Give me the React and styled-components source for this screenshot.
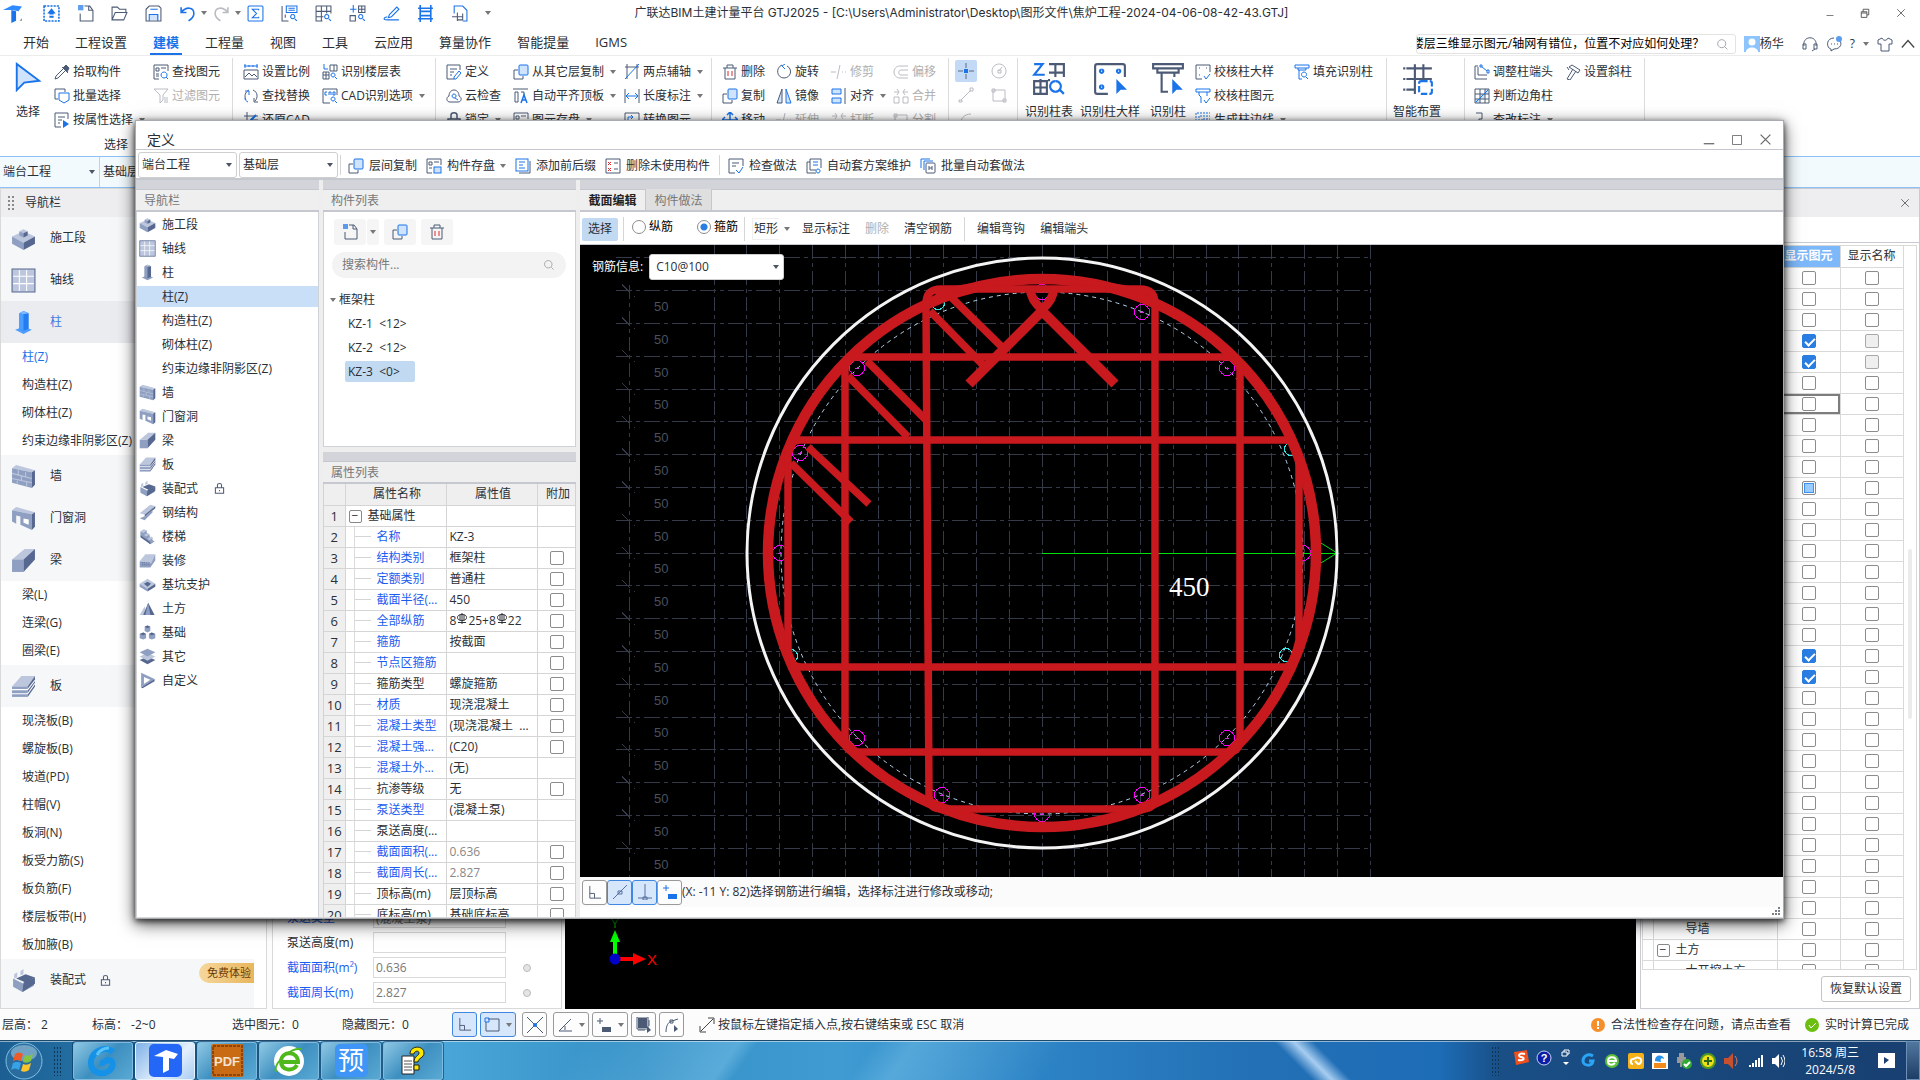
import React from "react";
import styled, { createGlobalStyle, css } from "styled-components";

const DARK = "#4d5a75";
const BLUE = "#1a73e8";
const PALE = "#cfe3fc";
const GREY = "#b9bcc2";
const RED = "#c8191e";

const GlobalStyle = createGlobalStyle`
  * { box-sizing: border-box; }
  html, body, #root { height: 100%; }
  body {
    margin: 0;
    overflow: hidden;
    background: #fff;
    color: #2b2f36;
    font: 12px/16px "Open Sans", "Noto Sans CJK SC", sans-serif;
  }
  button, input, select { font: inherit; color: inherit; margin: 0; padding: 0; }
  button { border: 0; background: none; white-space: nowrap; }
  a { color: inherit; text-decoration: none; }
  table { border-collapse: collapse; table-layout: fixed; }
  svg { display: block; flex: none; }
`;

/* ---------- icons ---------- */

const line = (d, stroke = DARK, extra = {}) => <path d={d} stroke={stroke} {...extra} />;

const icons = {
  logo: (
    <>
      <path d="M0 5 8 1l8 1-3 4-5-1z" fill="#2f8bff" />
      <path d="M7 5l4 1v8l-4 2z" fill={BLUE} />
      <path d="M14 14h2v-2z" fill="#888" />
    </>
  ),
  send: (
    <>
      <rect x="1" y="1" width="14" height="14" stroke={BLUE} strokeWidth="1.5" strokeDasharray="2 1" />
      <path d="M8 3 4 8h2v1h4V8h2zM6 10h4v2H6z" fill={BLUE} />
    </>
  ),
  newFile: (
    <>
      {line("M7 1h5l3 4v10H3V8M11 1v4h4")}
      <path d="M1 0h5v5H1z" fill={BLUE} opacity=".7" />
    </>
  ),
  open: <>{line("M1 14V2h5l2 2h6v3M1 14l3-7h11l-3 7z")}</>,
  save: (
    <>
      <path d="M4 9h9v5H4z" fill={PALE} />
      {line("M1 4l3-3h9l2 2v12H1z")}
      {line("M4 15V9h8v6M5 4h7", BLUE)}
    </>
  ),
  undo: <>{line("M2 2v5h5M2 7c5-6 12-5 12 1 0 3-2 5-5 7", BLUE, { strokeWidth: 1.5 })}</>,
  redo: <>{line("M14 2v5H9M14 7C9 1 2 2 2 8c0 3 2 5 5 7", GREY, { strokeWidth: 1.5 })}</>,
  sum: (
    <>
      <rect x="1" y="1" width="14" height="14" rx="1" stroke={BLUE} />
      {line("M11 5V4H5l4 4-4 4h6v-1", BLUE)}
    </>
  ),
  ruler: (
    <>
      {line("M1 1v14h6M4 12V9")}
      {line("M5 1h10v6H5zM7 3h6M7 5h6", BLUE)}
      {line("M11 9a2 2 0 1 0 .1 0M13 13l2 2", BLUE)}
    </>
  ),
  gridFind: (
    <>
      {line("M1 1h14v7M1 1v14h6M1 6h14M1 11h7M6 1v14M11 1v7")}
      {line("M11 9a2 2 0 1 0 .1 0M13 13l2 2", BLUE)}
    </>
  ),
  blocksFind: (
    <>
      {line("M9 1h6v6H9zM1 10h5v5H1zM12 1v6M9 4h6")}
      {line("M4 0v7M1 4h6M11 9a2 2 0 1 0 .1 0M13 13l2 2", BLUE)}
    </>
  ),
  pencil: <>{line("M6 9 13 2l2 2-7 7-3 1zM4 11c-4 1-4 3 0 3h11", BLUE)}</>,
  ladder: <>{line("M3 0v16M13 0v16M1 3h14M3 6h10M3 10h10M1 13h14", BLUE, { strokeWidth: 1.5 })}</>,
  exportBox: (
    <>
      {line("M3 8V1h8l4 4v10h-4", BLUE)}
      {line("M6 7v8M1 11h10M11 8v6H6")}
    </>
  ),
  cursorBig: <path d="M2 1v14l4-4 8-1z" fill={PALE} stroke={BLUE} />,
  dropper: (
    <>
      <path d="M9 4l4 4 2-4-3-3z" fill={DARK} stroke={DARK} />
      {line("M9 5 2 12l-1 3 3-1 7-7M8 3l6 6")}
    </>
  ),
  batch: (
    <>
      {line("M4 11H1V1h10v3")}
      <path d="M5 5h10v7l-5 3-5-3z" fill="#fff" stroke={BLUE} />
    </>
  ),
  propPick: (
    <>
      {line("M7 15H1V1h13v6M4 5h7M4 8h4M4 11h2")}
      <path d="M9 8v8l6-4z" fill={BLUE} />
    </>
  ),
  find: (
    <>
      {line("M6 15H1V1h14v6M3 4h3v3H3zM8 4h5M3 10h3M3 12h3")}
      {line("M11 8a3 3 0 1 0 .1 0M13 13l2 2", BLUE)}
    </>
  ),
  filter: <>{line("M1 1h14L10 7v5l-3 3V7zM11 10h4M11 12h4M11 14h4", GREY)}</>,
  scale: (
    <>
      {line("M1 6h14v9H1zM2 13l4-4 3 3 2-2 3 3")}
      {line("M1 2h14M2 0v4M14 0v4M6 1v2M10 1v2", BLUE)}
    </>
  ),
  replace: (
    <>
      {line("M3 12C1 8 2 4 6 2M10 2c5 2 5 8 2 11M11 10v4h4")}
      {line("M2 3h4v4M5 14c-2-1-3-2-3-4", BLUE)}
    </>
  ),
  restore: (
    <>
      {line("M1 4h14M4 0v12M7 8h8")}
      {line("M13 3 8 8v4", BLUE, { strokeWidth: 2 })}
    </>
  ),
  floorTable: (
    <>
      {line("M8 1h7v6H8zM1 8h6v7H1zM12 1v6M1 11h6M4 8v7")}
      {line("M2 0v5h4M11 9a2 2 0 1 0 .1 0M13 13l2 2", BLUE)}
    </>
  ),
  cad: (
    <>
      {line("M8 15H1V1h14v6")}
      {line("M5 4H3v3h2M7 7V4h2v3M11 4v3h2V4zM11 9a2 2 0 1 0 .1 0M13 13l2 2", BLUE)}
    </>
  ),
  define: (
    <>
      {line("M8 15H1V1h13v5M4 5h7M4 8h4M4 11h2")}
      {line("M8 13l5-6 2 2-5 6H8z", BLUE)}
    </>
  ),
  cloud: (
    <>
      {line("M4 14c-4 0-4-5-1-6 0-8 10-8 10 0 3 1 3 6-1 6z")}
      {line("M8 6a2 2 0 1 0 .1 0M9 10l3 2", BLUE)}
    </>
  ),
  lock: <>{line("M2 7h12v8H2zM5 7V3c0-3 6-3 6 0v4M8 10v2", DARK, { strokeWidth: 1.5 })}</>,
  copy: (
    <>
      {line("M5 6H1v9h9v-3")}
      <rect x="6" y="1" width="9" height="10" rx="1" fill={PALE} stroke={BLUE} />
    </>
  ),
  align: (
    <>
      {line("M0 1h15M2 4h3v10H2zM8 4h3v4")}
      {line("M8 15l3-8 3 8M9 12h4", BLUE, { strokeWidth: 1.5 })}
    </>
  ),
  disk: (
    <>
      {line("M6 15H1V1h14v6M3 4h3v3H3zM8 4h5M3 10h3")}
      <rect x="8" y="9" width="7" height="6" fill={PALE} stroke={BLUE} />
    </>
  ),
  axis: <>{line("M1 3h14M3 0v15M13 0v15")}{line("M1 15 15 0", BLUE)}</>,
  length: <>{line("M1 1v14M15 1v14")}{line("M2 8h12M5 5 2 8l3 3M11 5l3 3-3 3", BLUE)}</>,
  convert: <>{line("M1 1h14v14H1zM9 9h4v4H9z")}{line("M4 11V5h5M7 3l2 2-2 2", BLUE)}</>,
  trash: (
    <>
      {line("M1 4h14M5 4V1h6v3M3 4v11h10V4")}
      {line("M6 7v5M10 7v5", "#e0262b")}
    </>
  ),
  rotate: <>{line("M6 1C-1 4 1 14 8 14s9-9 3-12")}{line("M9 0 6 2l3 3", BLUE)}</>,
  mirror: (
    <>
      <path d="M6 2v13H1zM10 2v13h5z" fill={PALE} />
      {line("M6 1v14H1z")}
      {line("M10 1v14h5z", BLUE)}
    </>
  ),
  trim: <>{line("M0 8h5M11 8h1M14 8h1M9 1 6 15", GREY)}</>,
  alignBox: (
    <>
      <path d="M1 1h9v5H1zM1 10h9v5H1z" fill={PALE} stroke={BLUE} />
      {line("M14 0v16")}
    </>
  ),
  offset: <>{line("M15 2H7C-1 2-1 14 7 14h8M15 6H8c-3 0-3 5 0 5h7", GREY)}</>,
  merge: <>{line("M1 9h5v6H1zM10 9h5v6h-5zM1 4h5M4 1l2 3-2 3M15 4h-5M12 1l-2 3 2 3", GREY)}</>,
  move: <>{line("M8 0v16M0 8h16M5 3l3-3 3 3M3 5 0 8l3 3M13 5l3 3-3 3", BLUE, { strokeWidth: 1.5 })}</>,
  point: (
    <>
      {line("M8 0v5M8 11v5M0 8h5M11 8h5", "#5a6680")}
      <rect x="6" y="6" width="4" height="4" fill={BLUE} />
    </>
  ),
  dial: <>{line("M8 1a7 7 0 1 0 .1 0M8 8l3-4M7 7h3v3H7z", GREY)}</>,
  segment: <>{line("M3 13 13 3M1 13h3v2H1zM12 1h3v3h-3z", GREY)}</>,
  square: <>{line("M2 3h12v11H2zM1 2h3v3H1zM12 12h3v3h-3z", GREY)}</>,
  curve: <>{line("M2 15C2 8 6 3 13 3", GREY)}</>,
  colTable: (
    <>
      {line("M8 1h7v6M11 1v6M8 5h7M1 9h6v6H1zM4 8v7M1 12h6M8 8v1")}
      {line("M1 1h4L1 6h5M11 9a2.5 2.5 0 1 0 .1 0M13 13l2 2", BLUE)}
    </>
  ),
  colDetail: (
    <>
      {line("M7 15H2a1 1 0 0 1-1-1V2a1 1 0 0 1 1-1h12a1 1 0 0 1 1 1v5")}
      {line("M4 3.500a.8.800 0 1 0 .1 0M12 3.500a.8.800 0 1 0 .1 0M4 11a.8.800 0 1 0 .1 0", BLUE)}
      <path d="M11 8v7l2-2h3z" fill={BLUE} />
    </>
  ),
  colPick: (
    <>
      {line("M1 1h14v2H1zM3 3v2h10V3M5 5v9h3M11 5v2")}
      <path d="M10 8v7l2-2h3z" fill={BLUE} />
    </>
  ),
  checkCol: (
    <>
      {line("M7 15H1V1h14v7M4 4h1M11 4h1M4 11h1")}
      {line("M9 12l2 3 4-5", BLUE)}
    </>
  ),
  checkEl: <>{line("M1 1h14v3H1zM4 4v3l2 2v6M12 4v4M9 12l2 3 4-5", BLUE)}</>,
  edge: <>{line("M1 15V1h14M4 15V4h11M7 15V7h8", BLUE, { strokeDasharray: "2 1" })}</>,
  fillPick: <>{line("M1 1h14v3H1zM4 4v2h8V4M5 6v9h3M10 8a2.500 2.500 0 1 0 .1 0M12 13l2 2", BLUE)}</>,
  smart: (
    <>
      {line("M3 3h12M3 8h12M3 13h4M7 1v14M11 1v8M2 2.500v1M2 7.500v1M2 12.500v1")}
      <rect x="9" y="9" width="6" height="6" rx="1" fill="#fff" stroke={BLUE} strokeDasharray="3 1" />
    </>
  ),
  colEnd: (
    <>
      {line("M4 2H1v13h12M4 3v8h9")}
      {line("M6 1h2v2H6zM8 3l5 4M13 6h2v3h-2z", BLUE)}
    </>
  ),
  corner: (
    <>
      <path d="M1 11h5V6h5V1h4v5h-4v5H6v4H1z" fill={PALE} />
      {line("M1 1h14v14H1zM1 6h14M1 11h14M6 1v14M11 1v14")}
      {line("M2 14 14 2", BLUE)}
    </>
  ),
  note: <>{line("M2 1h6v6H5v8h4")}{line("M10 13h5", BLUE, { strokeWidth: 2 })}</>,
  slant: <>{line("M4 3l3-2 8 5-2 3zM8 5 2 15l3 1 6-9M2 3l2 3")}</>,
  affix: (
    <>
      {line("M4 15h11V3")}
      <rect x="1" y="1" width="12" height="12" fill="#fff" stroke={BLUE} />
      {line("M4 4h6M4 7h4M4 10h6", BLUE)}
    </>
  ),
  unused: (
    <>
      {line("M1 1h14v14H1zM9 5h4M9 11h4")}
      {line("M3 4l3 3M6 4 3 7M3 10l3 3M6 10l-3 3", "#e0262b")}
    </>
  ),
  checkDoc: <>{line("M7 15H1V1h14v7M4 5h7M4 8h4")}{line("M8 12l3 3 4-6", BLUE)}</>,
  planDoc: (
    <>
      {line("M4 4H1v11h9M4 1h11v9M4 1v11h6")}
      {line("M7 4h5M7 7h5M12 11a2 2 0 1 0 .1 0", BLUE)}
    </>
  ),
  batchDoc: (
    <>
      {line("M1 10V1h9M4 12V3h9", BLUE)}
      <rect x="6" y="5" width="9" height="10" rx="1" fill="#fff" stroke={DARK} />
      {line("M9 8v4M12 8v4M9 10h3")}
    </>
  ),
  search: <>{line("M7 2a5 5 0 1 0 .1 0M11 11l3 3", "#8f939a")}</>,
  headset: <>{line("M2 10C0-1 16-1 14 10M1 8h3v5H1zM12 8h3v5h-3zM13 13l-3 2")}</>,
  chat: (
    <>
      {line("M8 2c-8 0-8 10-3 11v2l3-2c7 0 8-6 6-8M5 8h1M8 8h1M11 8h1")}
      <circle cx="13" cy="3" r="3" fill="#5b9bf0" />
    </>
  ),
  shirt: <>{line("M5 2 1 4v4h3v7h8V8h3V4l-4-2c-1 3-5 3-6 0z")}</>,
  up: <>{line("M1 12 8 4l7 8", "#444", { strokeWidth: 1.5 })}</>,
  close: <>{line("M2 2l12 12M14 2 2 14", "#666", { strokeWidth: 1.5 })}</>,
  max: <>{line("M2 2h12v12H2z", "#555")}</>,
  min: <>{line("M1 13h14", "#555", { strokeWidth: 1.5 })}</>,
  restoreWin: <>{line("M2 6h9v9H2zM5 6V2h9v9h-3M2 8h9", "#555", { strokeWidth: 1.5 })}</>,
  ortho: <>{line("M3 1v13h12M3 9h5v5")}</>,
  diag: <>{line("M1 15 15 1M6 7h4v3H6z", "#56709f")}</>,
  perp: <>{line("M8 0v14M1 14h14M6 13h4v3H6z", "#56709f")}</>,
  dyn: <>{line("M4 1v6M1 4h6", BLUE)}<path d="M6 10h9v5H6z" fill={BLUE} /></>,
  dynDark: <>{line("M4 1v6M1 4h6")}<path d="M6 10h9v5H6z" fill={DARK} /></>,
  snapBox: <>{line("M4 2h11v12H2V5")}{line("M1 1h4v4H1z", BLUE)}</>,
  cross: <>{line("M0 0l16 16M16 0 0 16")}<circle cx="8" cy="8" r="2" fill={BLUE} /></>,
  angle: <>{line("M14 2 2 14h13M8 9v4")}</>,
  layers: <><path d="M2 1h9v10H2z" fill={DARK} />{line("M2 13h7M13 3v6M1 0h11v12H1z")}<path d="M11 9v7l4-3z" fill={DARK} /></>,
  poly: <>{line("M2 15C2 9 4 5 8 4l6-2M6 3h3v3H6z")}<path d="M10 8v7l4-3z" fill={DARK} /></>,
  expand: <>{line("M2 14 14 2M9 1h6v6M1 9v6h6", "#444")}</>,
};

const Icon = ({ name, size = 16 }) => (
  <svg width={size} height={size} viewBox="0 0 16 16" fill="none" aria-hidden="true">
    {icons[name]}
  </svg>
);

const iso = {
  brick: (l, m, d) => (
    <>
      <path d="M1 10 12 5l11 5-11 6z" fill={l} />
      <path d="M1 10v7l11 6v-7z" fill={m} />
      <path d="M23 10v7l-11 6v-7z" fill={d} />
      <path d="M8 5l4-2 4 2-4 2z" fill={l} />
      <path d="M8 5v4l4 2V7z" fill={m} />
      <path d="M16 5v4l-4 2V7z" fill={d} />
    </>
  ),
  axis: (l, m, d) => (
    <>
      <path d="M1 1h22v22H1z" fill={l} stroke={d} />
      <path d="M8 2v20M15 2v20M2 8h20M2 15h20" stroke="#fff" />
    </>
  ),
  column: (l, m, d) => (
    <>
      <path d="M4 19l8-3 8 3-8 4z" fill={m} />
      <path d="M8 3l4-2 5 2v15l-5 2-4-2z" fill={d} />
      <path d="M8 3v15l4 2V4z" fill={m} />
      <path d="M8 3l4-2 5 2-5 1z" fill={l} />
    </>
  ),
  wall: (l, m, d) => (
    <>
      <path d="M1 4l4-3 18 5-3 2z" fill={l} />
      <path d="M1 4v14l19 5V8z" fill={m} />
      <path d="M20 8l3-2v14l-3 3z" fill={d} />
      <path d="M1 9l19 5M1 14l19 4M7 6v4M14 8v4M10 12v4M6 16v3M15 17v4" stroke={l} />
    </>
  ),
  door: (l, m, d) => (
    <>
      <path d="M1 4l4-3 18 5-3 2z" fill={l} />
      <path d="M1 4v11l4 2V9l4 1v8l11 5V8z" fill={m} />
      <path d="M20 8l3-2v14l-3 3z" fill={d} />
      <path d="M12 12l5 1v5l-5-2z" fill="#fff" />
    </>
  ),
  beam: (l, m, d) => (
    <>
      <path d="M1 11 13 1h10l-11 10z" fill={l} />
      <path d="M1 11h11v12H1z" fill={m} />
      <path d="M12 11 23 1v10L12 23z" fill={d} />
    </>
  ),
  slab: (l, m, d) => (
    <>
      <path d="M1 12 10 2h13l-7 10z" fill={l} />
      <path d="M1 12h15v10H1z" fill={m} />
      <path d="M16 12l7-10v10l-7 10z" fill={d} />
      <path d="M1 15h15l7-9M1 19h15l7-10" stroke="#fff" fill="none" />
    </>
  ),
  precast: (l, m, d) => (
    <>
      <path d="M2 10l10 5 10-5v7l-11 6-9-5z" fill={m} />
      <path d="M5 10l9-4 9 3-9 5z" fill={d} />
      <path d="M12 14l11-5v6l-12 8z" fill={d} />
      <path d="M3 6l3-2v5l-3 1zM9 3l3-2v5L9 7z" fill={l} />
    </>
  ),
  steel: (l, m, d) => (
    <>
      <path d="M1 13 16 1l7 2L8 15z" fill={l} />
      <path d="M8 15 23 3v3L8 18z" fill={d} />
      <path d="M1 20l8-3 10-9v4L8 23z" fill={m} />
    </>
  ),
  stairs: (l, m, d) => (
    <>
      <path d="M2 5l5-3 4 2v3l4 2v3l4 2v3l3 2-6 4L2 10z" fill={m} />
      <path d="M2 5l5-3 4 2-5 3zM7 10l5-3 3 2-5 3zM12 15l5-3 3 2-5 3z" fill={l} />
      <path d="M2 10v3l14 10v-3z" fill={d} />
    </>
  ),
  decor: (l, m, d) => (
    <>
      <path d="M1 13 9 3h14l-6 13z" fill={l} />
      <path d="M1 13l16 3 6-13v9l-7 10H1z" fill={m} />
      <path d="M4 15h12M4 18h12" stroke={d} strokeDasharray="2 1" />
    </>
  ),
  pit: (l, m, d) => (
    <>
      <path d="M1 11l11-7 11 7-11 7z" fill={l} />
      <path d="M1 11v4l11 7v-4z" fill={m} />
      <path d="M23 11v4l-11 7v-4z" fill={d} />
      <path d="M7 11l5-3 5 3-5 4z" fill={d} />
    </>
  ),
  earth: (l, m, d) => (
    <>
      <path d="M1 21 8 9l4 12z" fill={l} />
      <path d="M6 21 13 4l9 17z" fill={d} />
      <path d="M13 4l-4 17h7z" fill={m} />
    </>
  ),
  base: (l, m, d) => (
    <>
      <path d="M8 4l4-2 4 2v6l-4 2-4-2zM1 14l5-2 4 2v6l-4 2-5-2zM14 14l4-2 5 2v6l-5 2-4-2z" fill={m} />
      <path d="M8 4l4-2 4 2-4 2zM1 14l5-2 4 2-4 2zM14 14l4-2 5 2-5 2z" fill={d} />
    </>
  ),
  other: (l, m, d) => (
    <>
      <path d="M1 17l11-5 11 5-11 6z" fill={d} />
      <path d="M1 12l11-5 11 5-11 6z" fill={l} />
      <path d="M1 6l11-5 11 5-11 6z" fill={m} />
    </>
  ),
  custom: (l, m, d) => (
    <>
      <path d="M3 1l19 9L3 22z" fill={m} />
      <path d="M7 7l9 4-9 6z" fill="#fff" />
      <path d="M3 22 22 10v3L5 23z" fill={d} />
    </>
  ),
};

const IsoIcon = ({ name, size, active }) => (
  <svg width={size} height={size} viewBox="0 0 24 24" fill="none" aria-hidden="true">
    {active ? iso[name]("#7db8ff", "#4b9dff", "#237cf0") : iso[name]("#bcc6dc", "#8f9fc1", "#566790")}
  </svg>
);

const Caret = styled.span`
  width: 0;
  height: 0;
  flex: none;
  border: 3px solid transparent;
  border-top: 4px solid ${(p) => p.$color || "#777"};
  border-bottom: 0;
`;

/* ---------- shell ---------- */

const Shell = styled.div`
  height: 100vh;
  display: flex;
  flex-direction: column;
  overflow: hidden;
`;

const TitleBar = styled.header`
  display: grid;
  grid-template-columns: 1fr auto 1fr;
  align-items: center;
  height: 26px;
  flex: none;
  padding-left: 3px;
`;

const QuickTools = styled.div`
  display: flex;
  align-items: center;
`;

const QuickButton = styled.button`
  width: 34px;
  height: 24px;
  display: flex;
  align-items: center;
  gap: 5px;
  &:first-child { width: 40px; }
`;

const WindowTitle = styled.h1`
  margin: 0;
  font-family: "Inter", "Noto Sans CJK SC", sans-serif;
  font-size: 12px;
  font-weight: 400;
`;

const WindowButtons = styled.div`
  display: flex;
  justify-content: flex-end;
  align-items: center;
  gap: ${(p) => p.$gap}px;
  padding-right: ${(p) => p.$end}px;
`;

const MenuRow = styled.div`
  display: flex;
  align-items: flex-end;
  height: 30px;
  flex: none;
  border-bottom: 1px solid #ececec;
  padding: 0 5px 0 20px;
`;

const MenuTabs = styled.nav`
  display: flex;
  gap: 20px;
  flex: 1;
`;

const MenuTab = styled.a`
  padding: 0 3px;
  height: 26px;
  font-size: 13px;
  line-height: 26px;
  border-bottom: 2px solid ${(p) => (p.$active ? BLUE : "transparent")};
  ${(p) => p.$active && css`color: ${BLUE}; font-weight: 700;`}
`;

const HelpArea = styled.div`
  display: flex;
  align-items: center;
  height: 22px;
  gap: 8px;
`;

const HelpSearch = styled.label`
  display: flex;
  align-items: center;
  width: 320px;
  height: 20px;
  border: 1px solid #e3e3e3;
  border-radius: 3px;
  padding-right: 6px;
  input {
    flex: 1;
    min-width: 0;
    border: 0;
    outline: 0;
    color: #000;
    text-indent: -5px;
    background: none;
  }
`;

const User = styled.span`
  display: flex;
  align-items: center;
  margin-right: 10px;
`;

const Ribbon = styled.div`
  display: flex;
  height: 100px;
  flex: none;
  padding-top: 2px;
`;

const RibbonGroup = styled.section`
  width: ${(p) => p.$w}px;
  padding: 2px 0 0 ${(p) => p.$pad}px;
  display: flex;
  flex: none;
  position: relative;
  border-right: 1px solid #dcdcdc;
`;

const GroupName = styled.span`
  position: absolute;
  bottom: 3px;
  left: 0;
  right: 0;
  text-align: center;
`;

const RibbonColumn = styled.div`
  width: ${(p) => p.$w}px;
  flex: none;
`;

const Command = styled.button`
  height: 24px;
  display: flex;
  align-items: center;
  gap: 3px;
  color: ${(p) => (p.disabled ? "#b0b0b0" : "inherit")};
  ${Caret} { margin-left: 3px; }
`;

const BigCommand = styled.button`
  width: ${(p) => p.$w}px;
  height: 60px;
  display: flex;
  flex-direction: column;
  align-items: center;
  justify-content: space-between;
  padding-top: 2px;
  flex: none;
`;

const ToolCell = styled.button`
  width: 22px;
  height: 22px;
  margin-bottom: 2px;
  display: grid;
  place-items: center;
  border-radius: 2px;
  background: ${(p) => (p.$active ? "#c2daf5" : "none")};
`;

const LevelBar = styled.div`
  display: flex;
  height: 32px;
  flex: none;
  background: #f2fafe;
  border: solid #8cc2f5;
  border-width: 1px 0;
`;

const SelectBox = styled.span`
  position: relative;
  display: block;
  width: ${(p) => p.$w}px;
  height: ${(p) => p.$h || 26}px;
  select {
    appearance: none;
    width: 100%;
    height: 100%;
    padding: 0 ${(p) => p.$pad || 3}px;
    outline: 0;
    border: ${(p) => (p.$plain ? "0" : "1px solid #cfcfcf")};
    border-right: 1px solid #cfcfcf;
    border-radius: ${(p) => (p.$plain ? 0 : 3)}px;
    background: ${(p) => (p.$plain ? "none" : "#fff")};
  }
  ${Caret} {
    position: absolute;
    right: 5px;
    top: 50%;
    margin-top: -2px;
    pointer-events: none;
  }
`;

const Picker = ({ value, label, ...rest }) => (
  <SelectBox {...rest}>
    <select aria-label={label} defaultValue={value}>
      <option>{value}</option>
    </select>
    <Caret $color="#4d5563" />
  </SelectBox>
);

const Workspace = styled.main`
  display: flex;
  flex: 1;
  min-height: 0;
  background: #fdfdfd;
`;

const SideNav = styled.nav`
  width: 267px;
  flex: none;
  overflow: hidden;
  border: 1px solid #d9d9d9;
  background: #fff;
`;

const PanelHeader = styled.div`
  height: 28px;
  display: flex;
  align-items: center;
  gap: 10px;
  padding: 0 9px 0 6px;
  background: #eeeef0;
  justify-content: ${(p) => (p.$end ? "flex-end" : "flex-start")};
`;

const Grip = styled.span`
  width: 8px;
  height: 16px;
  background: radial-gradient(circle, #888 1px, transparent 1px) 0 0 / 4px 4px;
`;

const NavSection = styled.a`
  display: flex;
  align-items: center;
  height: ${(p) => (p.$last ? 49 : 42)}px;
  width: 253px;
  gap: 14px;
  padding: 0 0 ${(p) => (p.$last ? 7 : 0)}px 10px;
  color: ${(p) => (p.$active ? "#4179d8" : "inherit")};
  background: ${(p) => (p.$active ? "#ebecf0" : "#f6f7f9")};
`;

const NavLeaf = styled.a`
  display: block;
  height: 28px;
  padding-left: 21px;
  line-height: 28px;
  white-space: nowrap;
  color: ${(p) => (p.$active ? BLUE : "inherit")};
`;

const Trial = styled.span`
  align-self: flex-start;
  margin: 4px 0 0 auto;
  padding: 2px 3px 2px 8px;
  border-radius: 10px 0 0 10px;
  font-size: 11px;
  color: #6b3b05;
  background: linear-gradient(90deg, #f6d79c, #e8b65c);
`;

const AttributePanel = styled.section`
  width: 290px;
  margin: 0 3px 0 5px;
  padding-bottom: 3px;
  flex: none;
  display: flex;
  flex-direction: column;
  justify-content: flex-end;
  overflow: hidden;
  border: 1px solid #d9d9d9;
  background: #fff;
`;

const AttributeRow = styled.label`
  display: flex;
  align-items: center;
  height: 25px;
  flex: none;
  padding-left: 14px;
  color: ${(p) => (p.$key ? "#1b5cf0" : "inherit")};
  span { width: 86px; white-space: nowrap; }
  input {
    width: 133px;
    height: 21px;
    padding-left: 2px;
    border: 1px solid #d9d9d9;
    color: #777;
  }
  i {
    width: 8px;
    height: 8px;
    margin-left: 17px;
    border: 1px solid #bbb;
    border-radius: 50%;
    background: #e4e4e4;
  }
`;

const ModelView = styled.section`
  flex: 1;
  min-width: 0;
  background: #000;
  display: flex;
  align-items: flex-end;
`;

const DisplayPanel = styled.aside`
  width: 280px;
  margin-left: 4px;
  flex: none;
  display: flex;
  flex-direction: column;
  border: 1px solid #c8ccd2;
  background: #fff;
`;

const PanelStrip = styled.div`
  height: 26px;
  flex: none;
  border-bottom: 1px solid #c8ccd2;
`;

const TableClip = styled.div`
  flex: 1;
  min-height: 0;
  overflow: hidden;
  display: flex;
  margin: 2px 2px 0 1px;
  border: 1px solid #d9d9d9;
`;

const DisplayTable = styled.table`
  width: 260px;
  th, td {
    height: 21px;
    padding: 0;
    border-right: 1px solid #d9d9d9;
    border-bottom: 1px solid #d9d9d9;
    text-align: center;
    font-weight: 400;
    line-height: 16px;
  }
  th:nth-child(3) { background: #7db8fa; color: #fff; font-weight: 700; }
  td:nth-child(2) { text-align: left; }
`;

const ScrollRail = styled.div`
  flex: 1;
  padding: 303px 4px 0;
  &::before {
    content: "";
    display: block;
    height: 170px;
    border-radius: 2px;
    background: #ebebeb;
  }
`;

const Check = styled.input.attrs({ type: "checkbox" })`
  appearance: none;
  display: inline-block;
  vertical-align: middle;
  width: 14px;
  height: 14px;
  border: 1px solid #8c8c8c;
  border-radius: 2px;
  background: #fff;
  &:checked {
    border-color: #2a7de1;
    background: #2a7de1;
  }
  &:checked::after {
    content: "";
    display: block;
    width: 8px;
    height: 4px;
    margin: 3px 0 0 2px;
    border: solid #fff;
    border-width: 0 0 2px 2px;
    transform: rotate(-45deg);
  }
  &:disabled { background: #efefef; border-color: #a8a8a8; }
  ${(p) => p.$mixed && css`
    background: #9accff;
    border: 1px solid #8c8c8c;
    box-shadow: inset 0 0 0 1px #fff, inset 0 0 0 2px #3d93f5;
  `}
`;

const FocusCell = styled.td`
  ${(p) => p.$focus && css`box-shadow: inset 0 0 0 2px #7d7d7d;`}
`;

const Indented = styled.span`
  padding-left: 32px;
`;

const Fold = styled.button`
  width: 13px;
  height: 13px;
  margin: 0 6px 0 ${(p) => p.$left}px;
  border: 1px solid #888;
  border-radius: 2px;
  line-height: 10px;
  background: #fff;
  vertical-align: middle;
`;

const RestoreButton = styled.button`
  align-self: flex-end;
  width: 90px;
  height: 26px;
  margin: 6px 8px 6px;
  border: 1px solid #c4c4c4;
  border-radius: 3px;
  flex: none;
`;

const StatusBar = styled.footer`
  display: flex;
  align-items: center;
  height: 31px;
  flex: none;
  padding: 0 11px 0 2px;
  background: #fcfcfc;
  white-space: nowrap;
`;

const StatusText = styled.span`
  width: ${(p) => (p.$w ? `${p.$w}px` : "auto")};
  margin-left: ${(p) => (p.$w ? 0 : 3)}px;
`;

const Spacer = styled.span`
  flex: 1;
`;

const ToggleButton = styled.button`
  display: flex;
  align-items: center;
  justify-content: center;
  gap: 6px;
  width: ${(p) => (p.$wide ? 36 : 25)}px;
  height: 25px;
  margin-right: ${(p) => p.$after || 0}px;
  flex: none;
  border: 1px solid ${(p) => (p.$active ? "#3f87e0" : "#9a9a9a")};
  border-radius: 3px;
  background: ${(p) => (p.$active ? "#d6e6fb" : "#fdfdfd")};
`;

const Badge = styled.svg`
  margin: 0 6px 0 ${(p) => p.$before}px;
`;

/* ---------- taskbar ---------- */

const Taskbar = styled.div`
  display: flex;
  align-items: center;
  height: 40px;
  flex: none;
  gap: 2px;
  padding: 0 0 0 4px;
  border-top: 1px solid #1d4a6c;
  box-shadow: inset 0 1px 0 rgba(255, 255, 255, 0.5);
  background:
    linear-gradient(45deg, transparent 67%, rgba(200, 228, 255, 0.8) 68%, transparent 69%),
    linear-gradient(125deg, transparent 30%, rgba(150, 215, 245, 0.35) 38%, transparent 39%, transparent 45%, rgba(150, 215, 245, 0.3) 47%, transparent 55%),
    linear-gradient(90deg, #1b5e92 0, #2b7fb2 160px, #4aa6d8 440px, #3590c6 640px, #3f9bd2 840px, #2b82c4 1050px, #2370b5 1250px, #1d6cb6 1440px, #194f86 1500px, #183f70 1920px);
`;

const TaskDots = styled.span`
  width: 9px;
  height: 30px;
  margin: 0 ${(p) => p.$after || 5}px 0 7px;
  background: radial-gradient(circle, #0d3357 1px, transparent 1px) 0 0 / 3px 4px;
`;

const TaskButton = styled.button`
  width: 60px;
  height: 38px;
  display: grid;
  place-items: center;
  border: 1px solid ${(p) => (p.$active ? "#e6f4ff" : "#7dbce0")};
  border-radius: 3px;
  box-shadow: 0 0 0 1px rgba(10, 50, 90, 0.6);
  background: ${(p) => (p.$active
    ? "linear-gradient(135deg, #7fb2e8, #e4effc 60%, #a9cdf3)"
    : "linear-gradient(135deg, #8fc8e4, #3d8fc0 50%, #5aa9d4)")};
`;

const Tray = styled.div`
  display: flex;
  align-items: center;
  gap: 8px;
  margin-left: auto;
  color: #fff;
`;

const Clock = styled.time`
  text-align: center;
  line-height: 17px;
  margin: 0 11px 0 8px;
`;

const ShowDesktop = styled.button`
  width: 14px;
  height: 39px;
  margin-left: 3px;
  border: 1px solid #6d8fb5;
  background: linear-gradient(#52779f, #1c3d66);
`;

/* ---------- definition window ---------- */

const Dialog = styled.div`
  position: absolute;
  inset: 120px 136px 161px 135px;
  display: flex;
  flex-direction: column;
  border: 1px solid #a8acb2;
  background: #fff;
  box-shadow: 0 2px 6px rgba(0, 0, 0, 0.7), 0 5px 16px rgba(0, 0, 0, 0.65);
`;

const DialogTitle = styled.div`
  display: flex;
  justify-content: space-between;
  align-items: center;
  height: 29px;
  flex: none;
  padding: 9px 11px 0;
  border-bottom: 1px solid #c5c9cf;
  h2 { margin: 0; font-size: 14px; font-weight: 400; }
`;

const DialogTools = styled.div`
  display: flex;
  align-items: center;
  height: 30px;
  flex: none;
  gap: 2px;
  padding: 1px 0 0 2px;
  border-bottom: 2px solid #c5c9cf;
`;

const Divider = styled.span`
  width: 1px;
  height: ${(p) => p.$h || 20}px;
  margin: 0 ${(p) => p.$after}px 0 ${(p) => p.$before}px;
  background: #d5d5d5;
  flex: none;
`;

const DialogCommand = styled.button`
  display: flex;
  align-items: center;
  gap: 5px;
  padding-top: 2px;
  margin-right: 7px;
`;

const DialogBody = styled.div`
  display: flex;
  flex: 1;
  min-height: 0;
  gap: 4px;
  background: #eee;
  border-bottom: 1px solid #d9d9d9;
`;

const Column = styled.div`
  display: flex;
  flex-direction: column;
  width: ${(p) => (p.$w ? `${p.$w}px` : "auto")};
  flex: ${(p) => (p.$w ? "none" : "1")};
  min-width: 0;
  min-height: 0;
  overflow: hidden;
`;

const DockHeader = styled.h3`
  margin: 0;
  height: 32px;
  flex: none;
  border-top: 9px solid #d3d4d9;
  border-bottom: 2px solid #c5c9cf;
  background: #efefef;
  box-shadow: inset 0 1px 0 #c5c9cf;
  padding: 0 8px;
  font-size: 12px;
  font-weight: 400;
  line-height: 23px;
  color: #777;
`;

const DockPane = styled.div`
  background: #fff;
  border: solid #cfd2d6;
  border-width: 0 1px ${(p) => (p.$h ? 1 : 0)}px;
  min-height: 0;
  overflow: hidden;
  ${(p) => (p.$h ? css`height: ${p.$h}px; flex: none; margin-bottom: 5px;` : css`flex: 1;`)}
`;

const TypeRow = styled.a`
  display: flex;
  align-items: center;
  gap: 6px;
  height: 21px;
  margin: 2px 0 3px;
  padding-left: ${(p) => (p.$leaf ? 25 : 2)}px;
  white-space: nowrap;
  background: ${(p) => (p.$active ? "#c9dff8" : "none")};
`;

const TypeLock = styled.span`
  margin-left: 10px;
`;

const ListTools = styled.div`
  display: flex;
  gap: 5px;
  padding: 7px 10px;
`;

const SplitButton = styled.div`
  display: flex;
  gap: 1px;
`;

const SoftButton = styled.button`
  display: grid;
  place-items: center;
  width: ${(p) => p.$w || 32}px;
  height: 26px;
  border-radius: 3px;
  background: #f5f5f5;
`;

const SearchPill = styled.label`
  display: flex;
  align-items: center;
  height: 26px;
  margin: 0 9px 11px 8px;
  padding: 0 11px 0 10px;
  border-radius: 13px;
  background: #f3f3f3;
  input { flex: 1; min-width: 0; border: 0; outline: 0; background: none; }
  input::placeholder { color: #777; opacity: 1; }
`;

const TreeHead = styled.div`
  display: flex;
  align-items: center;
  gap: 3px;
  height: 21px;
  margin-bottom: 3px;
  padding-left: 6px;
`;

const TreeItem = styled.a`
  display: block;
  width: 70px;
  height: 21px;
  margin: 0 0 3px 21px;
  padding-left: 3px;
  border-radius: 2px;
  line-height: 21px;
  white-space: pre;
  background: ${(p) => (p.$active ? "#c2d9f2" : "none")};
`;

const PropTable = styled.table`
  width: 252px;
  white-space: nowrap;
  th, td {
    height: 21px;
    padding: 0 0 0 3px;
    overflow: hidden;
    border-right: 1px solid #d5d5d5;
    border-bottom: 1px solid #d5d5d5;
    line-height: 16px;
    text-align: left;
    font-weight: 400;
  }
  thead th { background: #efefef; text-align: center; }
  tbody th { background: #efefef; padding: 0; text-align: center; font-size: 13px; }
  td:last-child { padding: 0; text-align: center; border-right: 0; }
`;

const PropName = styled.td`
  color: ${(p) => (p.$key ? "#1b5cf0" : "inherit")};
  background: linear-gradient(#dcdcdc, #dcdcdc) 8px 0 / 1px 100% no-repeat;
  &&::before {
    content: "";
    display: inline-block;
    width: 16px;
    height: 1px;
    margin: 0 6px;
    vertical-align: 4px;
    background: #d5d5d5;
  }
`;

const PropValue = styled.td`
  color: ${(p) => (p.$muted ? "#888" : "inherit")};
  svg { display: inline; vertical-align: 0; }
`;

const TabStrip = styled.div`
  display: flex;
  height: 32px;
  flex: none;
  border-top: 9px solid #d3d4d9;
  border-bottom: 2px solid #c5c9cf;
  background: #efefef;
  box-shadow: inset 0 1px 0 #c5c9cf;
`;

const DockTab = styled.button`
  width: 66px;
  padding-top: 2px;
  border-right: 1px solid #c5c9cf;
  font-weight: ${(p) => (p.$active ? 700 : 400)};
  color: ${(p) => (p.$active ? "#222" : "#777")};
  background: ${(p) => (p.$active ? "none" : "#dfdfdf")};
`;

const SectionTools = styled.div`
  display: flex;
  align-items: center;
  height: 33px;
  flex: none;
  padding: 2px 2px 0;
  border-bottom: 1px solid #c5c9cf;
  background: #fff;
`;

const TextButton = styled.button`
  height: 23px;
  padding: 0 ${(p) => (p.$active ? 6 : 0)}px;
  margin-right: ${(p) => (p.$active ? 0 : 15)}px;
  border-radius: 2px;
  background: ${(p) => (p.$active ? "#c2d9f2" : "none")};
  color: ${(p) => (p.disabled ? "#b0b0b0" : "inherit")};
`;

const RadioLabel = styled.label`
  display: flex;
  align-items: center;
  gap: 3px;
  color: #000;
  padding-bottom: 4px;
  margin-right: ${(p) => p.$after}px;
  input {
    appearance: none;
    width: 14px;
    height: 14px;
    border: 1px solid #8c8c8c;
    border-radius: 50%;
    background: #fff;
  }
  input:checked {
    border-color: #8c8c8c;
    background: radial-gradient(circle, #2a7de1 3px, #fff 4px);
  }
`;

const ShapePick = styled.button`
  display: flex;
  align-items: center;
  height: 22px;
  margin-right: 12px;
  ${Caret} { margin-left: 5px; }
  span:first-child { padding: 2px 1px; border: 1px solid #efefef; border-right: 0; }
`;

const Canvas = styled.div`
  position: relative;
  flex: 1;
  min-height: 0;
  background: #000;
  > svg { width: 100%; height: 100%; }
`;

const RebarInfo = styled.label`
  position: absolute;
  top: 9px;
  left: 12px;
  display: flex;
  align-items: center;
  gap: 6px;
  color: #fff;
  select { color: #2b2f36; }
`;

const SectionStatus = styled.div`
  display: flex;
  align-items: center;
  height: 40px;
  flex: none;
  padding: 0 2px 10px;
  background: linear-gradient(#fbfbfb 30px, #fff 0);
`;

const ResizeGrip = styled.svg`
  align-self: flex-end;
  margin: 0 1px -8px auto;
`;

/* ---------- data ---------- */

const ribbonGroups = [
  {
    w: 233, pad: 10, name: "选择",
    big: [{ w: 36, icon: "cursorBig", size: 30, text: "选择" }],
    cols: [
      { w: 99, left: 8, items: [["dropper", "拾取构件"], ["batch", "批量选择"], ["propPick", "按属性选择", "v"]] },
      { w: 74, items: [["find", "查找图元"], ["filter", "过滤图元", "x"]] },
    ],
  },
  {
    w: 203, pad: 10,
    cols: [
      { w: 79, items: [["scale", "设置比例"], ["replace", "查找替换"], ["restore", "还原CAD"]] },
      { w: 110, items: [["floorTable", "识别楼层表"], ["cad", "CAD识别选项", "v"]] },
    ],
  },
  {
    w: 276, pad: 10,
    cols: [
      { w: 67, items: [["define", "定义"], ["cloud", "云检查"], ["lock", "锁定", "v"]] },
      { w: 111, items: [["copy", "从其它层复制", "v"], ["align", "自动平齐顶板", "v"], ["disk", "图元存盘", "v"]] },
      { w: 80, items: [["axis", "两点辅轴", "v"], ["length", "长度标注", "v"], ["convert", "转换图元"]] },
    ],
  },
  {
    w: 237, pad: 10,
    cols: [
      { w: 54, items: [["trash", "删除"], ["copy", "复制"], ["move", "移动"]] },
      { w: 55, items: [["rotate", "旋转"], ["mirror", "镜像"], ["trim", "延伸", "x"]] },
      { w: 62, items: [["trim", "修剪", "x"], ["alignBox", "对齐", "v"], ["merge", "打断", "x"]] },
      { w: 50, items: [["offset", "偏移", "x"], ["merge", "合并", "x"], ["square", "分割", "x"]] },
    ],
  },
  {
    w: 69, pad: 6,
    cells: [["point", "segment", "curve"], ["dial", "square"]],
  },
  {
    w: 369, pad: 6,
    big: [
      { w: 50, icon: "colTable", size: 34, text: "识别柱表" },
      { w: 72, icon: "colDetail", size: 34, text: "识别柱大样" },
      { w: 44, icon: "colPick", size: 34, text: "识别柱" },
    ],
    cols: [
      { w: 99, left: 5, items: [["checkCol", "校核柱大样"], ["checkEl", "校核柱图元"], ["edge", "生成柱边线", "v"]] },
      { w: 80, items: [["fillPick", "填充识别柱"]] },
    ],
  },
  { w: 78, pad: 5, big: [{ w: 50, icon: "smart", size: 34, text: "智能布置" }] },
  {
    w: 180, pad: 9,
    cols: [
      { w: 91, items: [["colEnd", "调整柱端头"], ["corner", "判断边角柱"], ["note", "查改标注", "v"]] },
      { w: 70, items: [["slant", "设置斜柱"]] },
    ],
  },
];

const sideNav = [
  { icon: "brick", text: "施工段" },
  { icon: "axis", text: "轴线" },
  { icon: "column", text: "柱", active: true, leaves: ["柱(Z)", "构造柱(Z)", "砌体柱(Z)", "约束边缘非阴影区(Z)"] },
  { icon: "wall", text: "墙" },
  { icon: "door", text: "门窗洞" },
  { icon: "beam", text: "梁", leaves: ["梁(L)", "连梁(G)", "圈梁(E)"] },
  {
    icon: "slab", text: "板",
    leaves: ["现浇板(B)", "螺旋板(B)", "坡道(PD)", "柱帽(V)", "板洞(N)", "板受力筋(S)", "板负筋(F)", "楼层板带(H)", "板加腋(B)"],
  },
];

const typeRows = [
  ["施工段", "brick"], ["轴线", "axis"], ["柱", "column"], ["柱(Z)"], ["构造柱(Z)"], ["砌体柱(Z)"],
  ["约束边缘非阴影区(Z)"], ["墙", "wall"], ["门窗洞", "door"], ["梁", "beam"], ["板", "slab"],
  ["装配式", "precast"], ["钢结构", "steel"], ["楼梯", "stairs"], ["装修", "decor"], ["基坑支护", "pit"],
  ["土方", "earth"], ["基础", "base"], ["其它", "other"], ["自定义", "custom"],
];

const Rebar = () => (
  <svg width="12" height="12" viewBox="0 0 12 12" fill="none" stroke="#2b2f36" aria-hidden="true">
    <ellipse cx="6" cy="4.500" rx="4.500" ry="3" />
    <path d="M6 0v11M2 9.500h8M4 2v5M8 2v5" />
  </svg>
);

// name, value, has check box, blue label, muted value
const properties = [
  ["名称", "KZ-3", 0, 1],
  ["结构类别", "框架柱", 1, 1],
  ["定额类别", "普通柱", 1, 1],
  ["截面半径(…", "450", 1, 1],
  ["全部纵筋", <>8<Rebar />25+8<Rebar />22</>, 1, 1],
  ["箍筋", "按截面", 1, 1],
  ["节点区箍筋", "", 1, 1],
  ["箍筋类型", "螺旋箍筋", 1, 0],
  ["材质", "现浇混凝土", 1, 1],
  ["混凝土类型", "(现浇混凝土\u00a0\u00a0…", 1, 1],
  ["混凝土强…", "(C20)", 1, 1],
  ["混凝土外…", "(无)", 0, 1],
  ["抗渗等级", "无", 1, 0],
  ["泵送类型", "(混凝土泵)", 0, 1],
  ["泵送高度(…", "", 0, 0],
  ["截面面积(…", "0.636", 1, 1, 1],
  ["截面周长(…", "2.827", 1, 1, 1],
  ["顶标高(m)", "层顶标高", 1, 0],
  ["底标高(m)", "基础底标高", 1, 0],
];

/* ---------- section drawing ---------- */

const CX = 1042;
const CY = 553;
const STEP = 32.8;
const range = (from, to) => Array.from({ length: to - from + 1 }, (_, i) => from + i);

const magentaBars = [
  [1142, 312], [1227, 368], [1303, 553], [857, 368], [800, 453], [780, 553],
  [1042, 292], [857, 738], [1227, 738], [942, 795], [1142, 795], [1042, 814],
];
const cyanBars = [[938, 303], [1291, 449], [791, 656], [1286, 655]];

const SectionDrawing = () => (
  <svg viewBox="580 245 1203 632" preserveAspectRatio="xMinYMin meet" fill="none" role="img" aria-label="柱截面">
    <g stroke="#343a48" shapeRendering="crispEdges">
      {range(-10, 10).map((k) => (
        <path key={k} d={`M${CX + k * STEP} 245V877`} strokeDasharray="14 4 4 4" />
      ))}
      <path d="M629 285V877" strokeDasharray="14 4 4 4" />
      {range(-9, 9).map((k) => (
        <path key={k} d={`M616 ${CY + k * STEP}H1371`} strokeDasharray="16 4 4 4" />
      ))}
      {range(-8, 9).map((k) => (
        <path key={k} d={`M622 ${CY + k * STEP - 6}l8 8M634 ${CY + k * STEP + 5}v1`} />
      ))}
    </g>
    <g fill="#4a505e" fontFamily="Liberation Sans, sans-serif" fontSize="13">
      {range(-10, 9).filter((k) => k !== -9).map((k) => (
        <text key={k} x="654" y={CY + (k + 0.5) * STEP + 4}>50</text>
      ))}
    </g>
    <circle cx={CX} cy={CY} r="261" stroke="#b9d4ee" strokeDasharray="4 4" />
    <g stroke="#f0f" shapeRendering="crispEdges">
      {magentaBars.map(([x, y]) => (
        <g key={`${x}-${y}`}>
          <circle cx={x} cy={y} r="7.500" />
          <path d={`M${x - 2} ${y}h4M${x} ${y - 1}v2`} stroke="#c63ad6" />
        </g>
      ))}
    </g>
    <g stroke="#33e6e6" shapeRendering="crispEdges">
      {cyanBars.map(([x, y]) => (
        <circle key={x} cx={x} cy={y} r="6.500" />
      ))}
    </g>
    <path d="M1042 553.500H1337M1321 543l16 10-16 10" stroke="#00e010" />
    <g stroke={RED}>
      <circle cx={CX} cy={CY} r="274" strokeWidth="10.500" />
      <g strokeWidth="7.500">
        <path d="M788 651V453q0-13 13-13H1285q14 0 14 26V640q-6 27-14 27H802q-14 0-14-16z" />
        <path d="M845 739V370q0-13 13-13H1227q13 0 13 13V739q0 13-13 13H858q-13 0-13-13z" />
        <path d="M929 796 926 304q0-15 15-15H1140q15 0 15 15V796q0 13-13 13H942q-13 0-13-13z" />
        <path d="M791 463l60 59M808 447l61 57M848 376l60 61M867 361l60 60M930 311l54 55M952 298l52 51" />
        <path d="M935 293Q980 281 1042 281t107 12" strokeWidth="5" />
      </g>
      <path d="M1042 311l-73 73M1042 311l73 73" strokeWidth="10" />
      <path d="M1030 288q1 13 12 21 11-8 12-21" strokeWidth="9" />
    </g>
    <circle cx={CX} cy={CY} r="295" stroke="#f4f4f4" strokeWidth="3" />
    <text x="1169" y="596" fill="#fff" fontFamily="Liberation Serif, serif" fontSize="27">450</text>
  </svg>
);

/* ---------- parts ---------- */

const quickIcons = [
  ["logo"], ["send"], ["newFile"], ["open"], ["save"], ["undo", 1], ["redo", 1], ["sum"], ["ruler"],
  ["gridFind"], ["blocksFind"], ["pencil"], ["ladder"], ["exportBox"],
];

const Header = () => (
  <>
    <TitleBar>
      <QuickTools>
        {quickIcons.map(([name, caret]) => (
          <QuickButton key={name} aria-label={name}>
            <Icon name={name} size={name === "logo" ? 19 : 17} />
            {caret && <Caret />}
          </QuickButton>
        ))}
        <Caret />
      </QuickTools>
      <WindowTitle>广联达BIM土建计量平台 GTJ2025 - [C:\Users\Administrator\Desktop\图形文件\焦炉工程-2024-04-06-08-42-43.GTJ]</WindowTitle>
      <WindowButtons $gap={26} $end={14}>
        <Icon name="min" size={8} />
        <Icon name="restoreWin" size={10} />
        <Icon name="close" size={10} />
      </WindowButtons>
    </TitleBar>
    <MenuRow>
      <MenuTabs>
        {["开始", "工程设置", "建模", "工程量", "视图", "工具", "云应用", "算量协作", "智能提量", "IGMS"].map((t) => (
          <MenuTab key={t} href="#" $active={t === "建模"}>{t}</MenuTab>
        ))}
      </MenuTabs>
      <HelpArea>
        <HelpSearch>
          <input aria-label="搜索帮助" defaultValue="楼层三维显示图元/轴网有错位，位置不对应如何处理？" />
          <Icon name="search" size={13} />
        </HelpSearch>
        <User>
          <svg width="16" height="16" viewBox="0 0 16 16" aria-hidden="true">
            <path d="M0 0h16v16H0z" fill="#8cc4fb" />
            <circle cx="8" cy="6" r="3.500" fill="#fff" />
            <path d="M2 16c0-6 12-6 12 0z" fill="#fff" />
          </svg>
          杨华
        </User>
        <Icon name="headset" />
        <Icon name="chat" />
        <span>?</span>
        <Caret />
        <Icon name="shirt" />
        <Icon name="up" size={14} />
      </HelpArea>
    </MenuRow>
  </>
);

const Indent = styled.span`
  width: ${(p) => p.$w}px;
  flex: none;
`;

const RibbonBar = () => (
  <Ribbon>
    {ribbonGroups.map((g) => (
      <RibbonGroup key={g.w} $w={g.w} $pad={g.pad}>
        {g.big?.map((b) => (
          <BigCommand key={b.text} $w={b.w}>
            <Icon name={b.icon} size={b.size} />
            {b.text}
          </BigCommand>
        ))}
        {g.cols?.map((c) => (
          <React.Fragment key={c.w}>
            {c.left && <Indent $w={c.left} />}
            <RibbonColumn $w={c.w}>
              {c.items.map(([icon, text, flag]) => (
                <Command key={text} disabled={flag === "x"}>
                  <Icon name={icon} />
                  {text}
                  {flag === "v" && <Caret />}
                </Command>
              ))}
            </RibbonColumn>
          </React.Fragment>
        ))}
        {g.cells?.map((cells, i) => (
          <RibbonColumn key={i} $w={33}>
            {cells.map((name) => (
              <ToolCell key={name} aria-label={name} $active={name === "point"}>
                <Icon name={name} />
              </ToolCell>
            ))}
          </RibbonColumn>
        ))}
        {g.name && <GroupName>{g.name}</GroupName>}
      </RibbonGroup>
    ))}
  </Ribbon>
);

const DisplaySettings = () => (
  <DisplayPanel>
    <PanelHeader $end>
      <Icon name="close" size={10} />
    </PanelHeader>
    <PanelStrip />
    <TableClip>
      <DisplayTable>
        <colgroup>
          <col width="10" />
          <col width="124" />
          <col width="63" />
          <col width="63" />
        </colgroup>
        <thead>
          <tr>
            <th />
            <th />
            <th>显示图元</th>
            <th>显示名称</th>
          </tr>
        </thead>
        <tbody>
          {range(0, 33).map((k) => (
            <tr key={k}>
              <td />
              <td>
                {k === 31 && <Indented>导墙</Indented>}
                {k === 32 && <><Fold $left={3} aria-label="折叠">−</Fold>土方</>}
                {k === 33 && <Indented>大开挖土方</Indented>}
              </td>
              <FocusCell $focus={k === 6}>
                <Check aria-label="显示图元" defaultChecked={[3, 4, 18, 19].includes(k)} $mixed={k === 10} />
              </FocusCell>
              <td>
                <Check aria-label="显示名称" disabled={k === 3 || k === 4} />
              </td>
            </tr>
          ))}
        </tbody>
      </DisplayTable>
      <ScrollRail />
    </TableClip>
    <RestoreButton>恢复默认设置</RestoreButton>
  </DisplayPanel>
);

const AxisGizmo = () => (
  <svg width="100" height="90" viewBox="565 919 100 90" fill="none" role="img" aria-label="坐标轴">
    <path d="M615 958V936" stroke="#0f0" strokeWidth="4" />
    <path d="M610 942l5-12 5 12z" fill="#0f0" />
    <path d="M618 959h16" stroke="#f00" strokeWidth="4" />
    <path d="M633 953l13 6-13 6z" fill="#f00" />
    <circle cx="615" cy="959" r="5.500" fill="#0000c8" />
    <text x="647" y="965" fill="#f00" fontFamily="Liberation Sans, sans-serif" fontSize="15">X</text>
    <text x="611" y="928" fill="#0a0" fontFamily="Liberation Sans, sans-serif" fontSize="12">Y</text>
  </svg>
);

const DefinitionDialog = () => (
  <Dialog role="dialog" aria-label="定义">
    <DialogTitle>
      <h2>定义</h2>
      <WindowButtons $gap={16} $end={0}>
        <Icon name="min" size={12} />
        <Icon name="max" size={12} />
        <Icon name="close" size={13} />
      </WindowButtons>
    </DialogTitle>
    <DialogTools>
      <Picker $w={99} label="工程" value="端台工程" />
      <Picker $w={99} label="楼层" value="基础层" />
      <Divider $before={0} $after={5} />
      <DialogCommand><Icon name="copy" />层间复制</DialogCommand>
      <DialogCommand><Icon name="disk" />构件存盘<Caret /></DialogCommand>
      <DialogCommand><Icon name="affix" />添加前后缀</DialogCommand>
      <DialogCommand><Icon name="unused" />删除未使用构件</DialogCommand>
      <Divider $before={0} $after={6} />
      <DialogCommand><Icon name="checkDoc" />检查做法</DialogCommand>
      <DialogCommand><Icon name="planDoc" />自动套方案维护</DialogCommand>
      <DialogCommand><Icon name="batchDoc" />批量自动套做法</DialogCommand>
    </DialogTools>
    <DialogBody>
      <Column $w={183}>
        <DockHeader>导航栏</DockHeader>
        <DockPane>
          {typeRows.map(([text, icon]) => (
            <TypeRow key={text} href="#" $leaf={!icon} $active={text === "柱(Z)"}>
              {icon && <IsoIcon name={icon} size={17} />}
              {text}
              {text === "装配式" && <TypeLock><Icon name="lock" size={11} /></TypeLock>}
            </TypeRow>
          ))}
        </DockPane>
      </Column>
      <Column $w={253}>
        <DockHeader>构件列表</DockHeader>
        <DockPane $h={235}>
          <ListTools>
            <SplitButton>
              <SoftButton aria-label="新建"><Icon name="newFile" /></SoftButton>
              <SoftButton aria-label="更多" $w={12}><Caret /></SoftButton>
            </SplitButton>
            <SoftButton aria-label="复制"><Icon name="copy" /></SoftButton>
            <SoftButton aria-label="删除"><Icon name="trash" /></SoftButton>
          </ListTools>
          <SearchPill>
            <input aria-label="搜索构件" placeholder="搜索构件..." />
            <Icon name="search" size={12} />
          </SearchPill>
          <TreeHead><Caret />框架柱</TreeHead>
          {["KZ-1  <12>", "KZ-2  <12>", "KZ-3  <0>"].map((t, i) => (
            <TreeItem key={t} href="#" $active={i === 2}>{t}</TreeItem>
          ))}
        </DockPane>
        <DockHeader>属性列表</DockHeader>
        <DockPane>
          <PropTable>
            <colgroup>
              <col width="21" />
              <col width="101" />
              <col width="91" />
              <col width="39" />
            </colgroup>
            <thead>
              <tr>
                <th />
                <th>属性名称</th>
                <th>属性值</th>
                <th>附加</th>
              </tr>
            </thead>
            <tbody>
              <tr>
                <th>1</th>
                <td><Fold $left={0} aria-label="折叠">−</Fold>基础属性</td>
                <td />
                <td />
              </tr>
              {properties.map(([name, value, box, key, muted], i) => (
                <tr key={name}>
                  <th>{i + 2}</th>
                  <PropName $key={key}>{name}</PropName>
                  <PropValue $muted={muted}>{value}</PropValue>
                  <td>{box ? <Check aria-label={name} /> : null}</td>
                </tr>
              ))}
            </tbody>
          </PropTable>
        </DockPane>
      </Column>
      <Column>
        <TabStrip>
          <DockTab $active>截面编辑</DockTab>
          <DockTab>构件做法</DockTab>
        </TabStrip>
        <SectionTools>
          <TextButton $active>选择</TextButton>
          <Divider $h={24} $before={5} $after={8} />
          <RadioLabel $after={24}><input type="radio" name="bar" />纵筋</RadioLabel>
          <RadioLabel $after={6}><input type="radio" name="bar" defaultChecked />箍筋</RadioLabel>
          <Divider $h={24} $before={0} $after={7} />
          <ShapePick><span>矩形</span><Caret /></ShapePick>
          <TextButton>显示标注</TextButton>
          <TextButton disabled>删除</TextButton>
          <TextButton>清空钢筋</TextButton>
          <Divider $h={24} $before={-3} $after={12} />
          <TextButton>编辑弯钩</TextButton>
          <TextButton>编辑端头</TextButton>
        </SectionTools>
        <Canvas>
          <SectionDrawing />
          <RebarInfo>
            钢筋信息:
            <Picker $w={135} $pad={6} label="钢筋信息" value="C10@100" />
          </RebarInfo>
        </Canvas>
        <SectionStatus>
          <ToggleButton aria-label="正交"><Icon name="ortho" size={15} /></ToggleButton>
          <ToggleButton aria-label="对象捕捉" $active><Icon name="diag" /></ToggleButton>
          <ToggleButton aria-label="垂点" $active><Icon name="perp" /></ToggleButton>
          <ToggleButton aria-label="动态输入"><Icon name="dyn" /></ToggleButton>
          (X: -11 Y: 82)选择钢筋进行编辑，选择标注进行修改或移动;
          <ResizeGrip width="8" height="8" viewBox="0 0 8 8" aria-hidden="true">
            <path d="M6 0h2v2H6zM6 3h2v2H6zM3 3h2v2H3zM0 6h2v2H0zM3 6h2v2H3zM6 6h2v2H6z" fill="#7a7f88" />
          </ResizeGrip>
        </SectionStatus>
      </Column>
    </DialogBody>
  </Dialog>
);

const TaskApps = () => (
  <>
    <svg width="40" height="38" viewBox="0 0 40 38" aria-label="开始菜单" role="img">
      <circle cx="20" cy="19" r="18" fill="#2a6c9e" stroke="#7ec0e6" />
      <ellipse cx="20" cy="11" rx="13" ry="8" fill="#8fb9d4" opacity=".7" />
      <path d="M11 12q4-3 8 0l-2 7q-4-2-8 0z" fill="#ee5a28" />
      <path d="M21 13q4 2 8-1l-2 7q-4 3-8 1z" fill="#86c440" />
      <path d="M9 21q4-2 8 0l-2 7q-4-3-8 0z" fill="#36a3e8" />
      <path d="M19 22q4 2 8-1l-2 7q-4 3-8 1z" fill="#fdc52c" />
    </svg>
    <TaskDots $after={9} />
    <TaskButton aria-label="广联达">
      <svg width="34" height="34" viewBox="0 0 34 34" fill="none">
        <path d="M27 8C20 2 7 6 5 17c-1 11 10 15 18 10 5-4 5-11 0-11-4 0-5 4-9 3" stroke="#1592e8" strokeWidth="6" />
        <path d="M23 4c-4 0-10 2-12 7" stroke="#5cc3f7" strokeWidth="3" />
      </svg>
    </TaskButton>
    <TaskButton $active aria-label="土建计量">
      <svg width="33" height="33" viewBox="0 0 33 33">
        <rect width="33" height="33" rx="5" fill="#2466f6" />
        <path d="M5 12 17 6l12 4-4 5-5-1v12l-6 3V13z" fill="#fff" />
      </svg>
    </TaskButton>
    <TaskButton aria-label="PDF">
      <svg width="33" height="33" viewBox="0 0 33 33">
        <rect width="33" height="33" rx="3" fill="#c96a14" />
        <rect x="2" y="2" width="29" height="29" fill="none" stroke="#8c4409" strokeDasharray="3 1" strokeWidth="2" />
        <text x="16" y="22" textAnchor="middle" fontSize="13" fontWeight="700" fill="#f3e3d3" fontFamily="Liberation Sans, sans-serif">PDF</text>
      </svg>
    </TaskButton>
    <TaskButton aria-label="浏览器">
      <svg width="32" height="32" viewBox="0 0 32 32" fill="none">
        <circle cx="16" cy="16" r="15" fill="#fff" />
        <path d="M8 17h17c0-11-16-12-17-1 0 10 12 11 16 4" stroke="#4fb81c" strokeWidth="4" />
        <path d="M3 27C0 18 18 2 29 4" stroke="#4fb81c" strokeWidth="2" />
      </svg>
    </TaskButton>
    <TaskButton aria-label="预算">
      <svg width="33" height="33" viewBox="0 0 33 33">
        <rect width="33" height="33" rx="5" fill="#3e95f5" />
        <text x="16" y="26" textAnchor="middle" fontSize="26" fill="#fff" fontFamily="Noto Sans CJK SC, sans-serif">预</text>
      </svg>
    </TaskButton>
    <TaskButton aria-label="帮助">
      <svg width="28" height="32" viewBox="0 0 28 32">
        <path d="M3 11h12v18H3z" fill="#fff" stroke="#222" />
        <path d="M5 16h8M5 19h8M5 22h8M5 25h8" stroke="#555" />
        <path d="M11 9c0-9 14-9 14-1 0 5-6 5-6 9h-4c0-6 5-6 5-9 0-3-5-2-5 1zM15 20h5v5h-5z" fill="#ffe800" stroke="#222" />
      </svg>
    </TaskButton>
  </>
);

const TrayIcons = () => (
  <svg width="272" height="36" viewBox="0 0 272 36" fill="none" role="img" aria-label="系统托盘">
    <path d="M1 9l13-2 2 12-13 3z" fill="#f0501e" />
    <path d="M12 11c-7-2-7 3-4 3s5 4-3 3" stroke="#fff" strokeWidth="2" />
    <circle cx="31" cy="15" r="7" fill="#0b1ea8" stroke="#c9d4f2" />
    <text x="31" y="19" textAnchor="middle" fontSize="11" fontWeight="700" fill="#fff" fontFamily="Liberation Sans, sans-serif">?</text>
    <path d="M49 9h5v4h-5zM51 9V7h5v4h-2" stroke="#fff" />
    <path d="M50 19h6l-3 3z" fill="#fff" />
    <path d="M80 13c-5-3-10 0-10 5s9 6 10 0h-4" stroke="#2aa5f5" strokeWidth="3" />
    <circle cx="99" cy="18" r="7" fill="#5ec03a" />
    <path d="M95 18h8c0-5-8-5-8 0s5 4 7 2" stroke="#fff" strokeWidth="2" />
    <rect x="115" y="10" width="16" height="16" rx="2" fill="#f7b118" />
    <path d="M120 21c-3 0-3-5 0-5s3-3 6-1c4 1 2 6-1 6l-3-3" stroke="#fff" strokeWidth="2" />
    <rect x="139" y="10" width="16" height="16" fill="#fff" />
    <path d="M142 18c0-8 9-6 9-2-3-2-4 0-3 3z" fill="#2590ea" />
    <path d="M141 20h12v5h-12z" fill="#f28a1c" />
    <path d="M166 10h5v4h2v6h-4v4h-2v-4h-3v-6h2z" fill="#999" />
    <circle cx="174" cy="21" r="5" fill="#2faa2f" />
    <path d="M171 21l2 2 4-4" stroke="#fff" strokeWidth="2" />
    <circle cx="195" cy="18" r="7" fill="#f2dd18" stroke="#4e9b24" strokeWidth="2" />
    <path d="M195 14v8M191 18h8" stroke="#276b1a" strokeWidth="2" />
    <path d="M211 15h4l5-5v16l-5-5h-4z" fill="#c9502f" />
    <path d="M222 13q4 5 0 10" stroke="#e07a5c" />
    <path d="M236 22h2v2h-2zM239 20h2v4h-2zM242 17h2v7h-2zM245 15h2v9h-2zM248 12h2v12h-2z" fill="#fff" />
    <path d="M259 15h3l4-4v14l-4-4h-3z" fill="#fff" />
    <path d="M268 14q3 4 0 8M270 12q4 6 0 12" stroke="#fff" />
  </svg>
);

const App = () => (
  <Shell>
    <GlobalStyle />
    <Header />
    <RibbonBar />
    <LevelBar>
      <Picker $plain $w={100} $h={30} label="工程" value="端台工程" />
      <Picker $plain $w={100} $h={30} label="楼层" value="基础层" />
    </LevelBar>
    <Workspace>
      <SideNav>
        <PanelHeader><Grip />导航栏</PanelHeader>
        {sideNav.map((s) => (
          <React.Fragment key={s.text}>
            <NavSection href="#" $active={s.active}>
              <IsoIcon name={s.icon} size={25} active={s.active} />
              {s.text}
            </NavSection>
            {s.leaves?.map((leaf) => (
              <NavLeaf key={leaf} href="#" $active={leaf === "柱(Z)"}>{leaf}</NavLeaf>
            ))}
          </React.Fragment>
        ))}
        <NavSection href="#" $last>
          <IsoIcon name="precast" size={25} />
          装配式
          <Icon name="lock" size={11} />
          <Trial>免费体验</Trial>
        </NavSection>
      </SideNav>
      <AttributePanel>
        <AttributeRow $key><span>泵送类型</span><input defaultValue="(混凝土泵)" /></AttributeRow>
        <AttributeRow><span>泵送高度(m)</span><input /></AttributeRow>
        <AttributeRow $key><span>截面面积(m²)</span><input defaultValue="0.636" /><i /></AttributeRow>
        <AttributeRow $key><span>截面周长(m)</span><input defaultValue="2.827" /><i /></AttributeRow>
      </AttributePanel>
      <ModelView>
        <AxisGizmo />
      </ModelView>
      <DisplaySettings />
    </Workspace>
    <StatusBar>
      <StatusText $w={90}>层高： 2</StatusText>
      <StatusText $w={140}>标高： -2~0</StatusText>
      <StatusText $w={110}>选中图元：0</StatusText>
      <StatusText $w={110}>隐藏图元：0</StatusText>
      <ToggleButton aria-label="正交" $active $after={3}><Icon name="ortho" size={15} /></ToggleButton>
      <ToggleButton aria-label="捕捉" $active $wide $after={6}><Icon name="snapBox" /><Caret /></ToggleButton>
      <ToggleButton aria-label="交点" $after={6}><Icon name="cross" /></ToggleButton>
      <ToggleButton aria-label="角度" $wide $after={3}><Icon name="angle" /><Caret /></ToggleButton>
      <ToggleButton aria-label="动态输入" $wide $after={3}><Icon name="dynDark" /><Caret /></ToggleButton>
      <ToggleButton aria-label="图层" $after={3}><Icon name="layers" /></ToggleButton>
      <ToggleButton aria-label="折线" $after={15}><Icon name="poly" /></ToggleButton>
      <Icon name="expand" />
      <StatusText>按鼠标左键指定插入点,按右键结束或 ESC 取消</StatusText>
      <Spacer />
      <Badge $before={0} width="14" height="14" viewBox="0 0 14 14">
        <circle cx="7" cy="7" r="7" fill="#f58f2c" />
        <path d="M6 3h2v5H6zM6 9h2v2H6z" fill="#fff" />
      </Badge>
      合法性检查存在问题，请点击查看
      <Badge $before={14} width="14" height="14" viewBox="0 0 14 14" fill="none">
        <circle cx="7" cy="7" r="7" fill="#6cbf10" />
        <path d="M4 7l2 3 5-5" stroke="#fff" />
      </Badge>
      实时计算已完成
    </StatusBar>
    <Taskbar>
      <TaskApps />
      <Tray>
        <TaskDots />
        <TrayIcons />
        <Clock>16:58 周三<br />2024/5/8</Clock>
        <svg width="17" height="15" viewBox="0 0 17 15" aria-hidden="true">
          <path d="M0 0h17v15H0z" fill="#fff" />
          <path d="M6 4l5 3-5 4z" fill="#1b3f6e" />
        </svg>
        <ShowDesktop aria-label="显示桌面" />
      </Tray>
    </Taskbar>
    <DefinitionDialog />
  </Shell>
);

export default App;
